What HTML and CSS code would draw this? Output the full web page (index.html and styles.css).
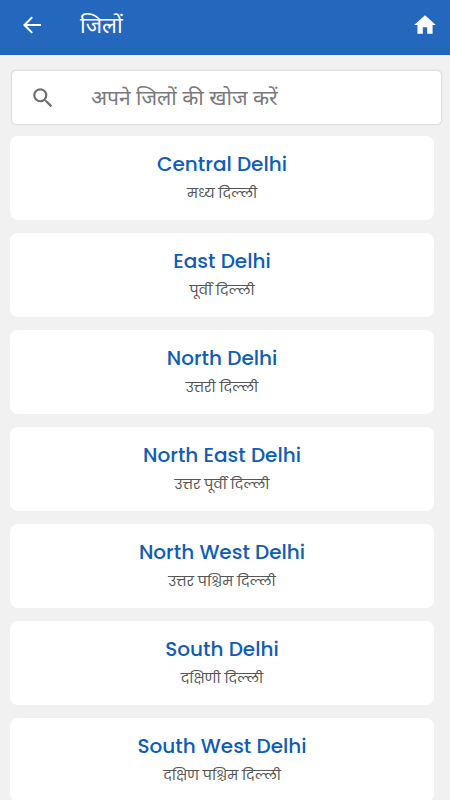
FILE: index.html
```html
<!DOCTYPE html>
<html lang="hi">
<head>
<meta charset="utf-8">
<meta name="viewport" content="width=device-width, initial-scale=1">
<title>जिलों</title>
<link rel="stylesheet" href="styles.css">
</head>
<body>
<header class="bar">
  <button class="icon-button" type="button" aria-label="Back"><svg class="icon" viewBox="0 0 24 24"><path d="M21 10.900H7l5.900-6.100L11.500 3.400 3 12l8.500 8.600 1.400-1.400L7 13.100h14z"/></svg></button>
  <h1 class="title">जिलों</h1>
  <button class="icon-button home" type="button" aria-label="Home"><svg class="icon" viewBox="0 0 24 24"><path d="M10 20v-6h4v6h5v-8h3L12 3 2 12h3v8z"/></svg></button>
</header>
<main class="content">
  <label class="search">
    <svg class="icon" viewBox="0 0 24 24" aria-hidden="true"><path d="M15.5 14h-.79l-.28-.27A6.47 6.47 0 0 0 16 9.5 6.5 6.5 0 1 0 9.5 16c1.61 0 3.09-.59 4.23-1.57l.27.28v.79l5 4.99L20.49 19zm-6 0a4.5 4.5 0 1 1 0-9 4.5 4.5 0 0 1 0 9z"/></svg>
    <input class="search-input" type="search" aria-label="अपने जिलों की खोज करें" placeholder="अपने जिलों की खोज करें">
  </label>
  <ul class="districts">
    <li><a class="card" href="#"><span class="name">Central Delhi</span><span class="local">मध्य दिल्ली</span></a></li>
    <li><a class="card" href="#"><span class="name">East Delhi</span><span class="local">पूर्वी दिल्ली</span></a></li>
    <li><a class="card" href="#"><span class="name">North Delhi</span><span class="local">उत्तरी दिल्ली</span></a></li>
    <li><a class="card" href="#"><span class="name">North East Delhi</span><span class="local">उत्तर पूर्वी दिल्ली</span></a></li>
    <li><a class="card" href="#"><span class="name">North West Delhi</span><span class="local">उत्तर पश्चिम दिल्ली</span></a></li>
    <li><a class="card" href="#"><span class="name">South Delhi</span><span class="local">दक्षिणी दिल्ली</span></a></li>
    <li><a class="card" href="#"><span class="name">South West Delhi</span><span class="local">दक्षिण पश्चिम दिल्ली</span></a></li>
  </ul>
</main>
</body>
</html>
```
FILE: styles.css
```css
* { box-sizing: border-box; }
body {
  margin: 0;
  height: 100vh;
  overflow: hidden;
  display: flex;
  flex-direction: column;
  background: #f1f1f1;
  font-family: "Noto Sans Devanagari", "Noto Sans", "Lohit Devanagari", sans-serif;
}
.bar {
  display: flex;
  align-items: center;
  flex: none;
  height: 55px;
  padding: 0 12px 4px 20px;
  border-bottom: 1px solid #1565c8;
  background: #2468bd;
  color: #fff;
}
.icon { width: 24px; height: 24px; fill: currentColor; flex: none; display: block; }
.icon-button { padding: 0; border: 0; background: none; color: inherit; }
.title { flex: 1; margin: 0 0 0 36px; padding-top: 5px; font-size: 22px; line-height: 32px; font-weight: 400; }
.home .icon { width: 26px; height: 26px; }
.content { padding: 16px 9px 0 12px; flex: 1; min-height: 0; overflow: hidden; }
.search {
  display: flex;
  align-items: center;
  height: 53px;
  padding: 0 18px;
  background: #fff;
  border-radius: 4px;
  box-shadow: 0 0 2px #aaa;
  color: #707070;
}
.search .icon { width: 26px; height: 26px; }
.search-input {
  flex: 1;
  min-width: 0;
  height: 48px;
  margin-left: 35px;
  padding: 5px 0 0;
  border: 0;
  outline: 0;
  background: none;
  font: inherit;
  font-size: 21px;
}
.search-input::placeholder { color: #7a7a7a; opacity: 1; }
.districts {
  display: grid;
  gap: 13px;
  margin: 12px 7px 0 -2px;
  padding: 0;
  list-style: none;
  font-family: Poppins, "Noto Sans", sans-serif;
}
.card {
  display: flex;
  flex-direction: column;
  align-items: center;
  height: 84px;
  padding-top: 13px;
  border-radius: 8px;
  background: #fff;
  text-decoration: none;
}
.name { font-size: 20px; line-height: 30px; font-weight: 500; color: #0f5db6; }
.local { font-size: 14px; line-height: 28px; color: #555; }
```
